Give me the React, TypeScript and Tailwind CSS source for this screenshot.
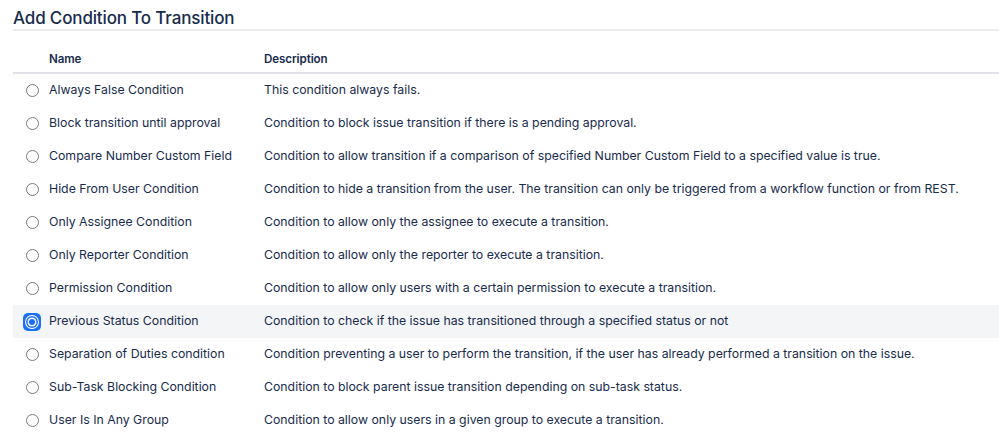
import React, { useState } from 'react';

const conditions = [
  ['Always False Condition', 'This condition always fails.'],
  ['Block transition until approval', 'Condition to block issue transition if there is a pending approval.'],
  ['Compare Number Custom Field', 'Condition to allow transition if a comparison of specified Number Custom Field to a specified value is true.'],
  ['Hide From User Condition', 'Condition to hide a transition from the user. The transition can only be triggered from a workflow function or from REST.'],
  ['Only Assignee Condition', 'Condition to allow only the assignee to execute a transition.'],
  ['Only Reporter Condition', 'Condition to allow only the reporter to execute a transition.'],
  ['Permission Condition', 'Condition to allow only users with a certain permission to execute a transition.'],
  ['Previous Status Condition', 'Condition to check if the issue has transitioned through a specified status or not'],
  ['Separation of Duties condition', 'Condition preventing a user to perform the transition, if the user has already performed a transition on the issue.'],
  ['Sub-Task Blocking Condition', 'Condition to block parent issue transition depending on sub-task status.'],
  ['User Is In Any Group', 'Condition to allow only users in a given group to execute a transition.'],
];

export default function App() {
  const [selected, setSelected] = useState(7);

  return (
    <div className="min-h-[435px] bg-white pl-[13px] pt-[7px] text-[#172b4d] font-['Inter',sans-serif]">
      {/* Title */}
      <h2 className="border-b-2 border-[#ebecf0] pb-[0px] text-[17px] font-medium leading-[22px] tracking-[-0.15px]">
        Add Condition To Transition
      </h2>

      {/* Table */}
      <div className="mt-[20px]">
        <div className="flex h-[23px] items-start border-b-2 border-[#dfe1e6] pt-[1px] text-[11.6px] font-semibold leading-[15px] tracking-[-0.1px]">
          <div className="w-[36px]" />
          <div className="w-[215px]">Name</div>
          <div>Description</div>
        </div>

        {conditions.map(([name, desc], i) => (
          <ConditionRow
            key={name}
            name={name}
            desc={desc}
            checked={selected === i}
            onSelect={() => setSelected(i)}
          />
        ))}
      </div>
    </div>
  );
}

function ConditionRow({
  name,
  desc,
  checked,
  onSelect,
}: {
  name: string;
  desc: string;
  checked: boolean;
  onSelect: () => void;
}) {
  return (
    <div
      onClick={onSelect}
      className={`flex h-[33px] cursor-pointer items-center whitespace-nowrap text-[12.3px] ${checked ? 'bg-[#f4f5f7]' : ''}`}
    >
      <div className="flex w-[36px] items-center justify-center pl-[2px]">
        {checked ? (
          <span className="flex h-[18px] w-[18px] items-center justify-center rounded-[5px] bg-[#1d6ff2]">
            <span className="flex h-[14px] w-[14px] items-center justify-center rounded-full bg-white">
              <span className="flex h-[12px] w-[12px] items-center justify-center rounded-full bg-[#1d6ff2]">
                <span className="h-[6px] w-[6px] rounded-full bg-[#1d6ff2] ring-[1.5px] ring-white" />
              </span>
            </span>
          </span>
        ) : (
          <span className="h-[13px] w-[13px] rounded-full border border-[#7a7a7a] bg-white" />
        )}
      </div>
      <div className="w-[215px]">{name}</div>
      <div>{desc}</div>
    </div>
  );
}
